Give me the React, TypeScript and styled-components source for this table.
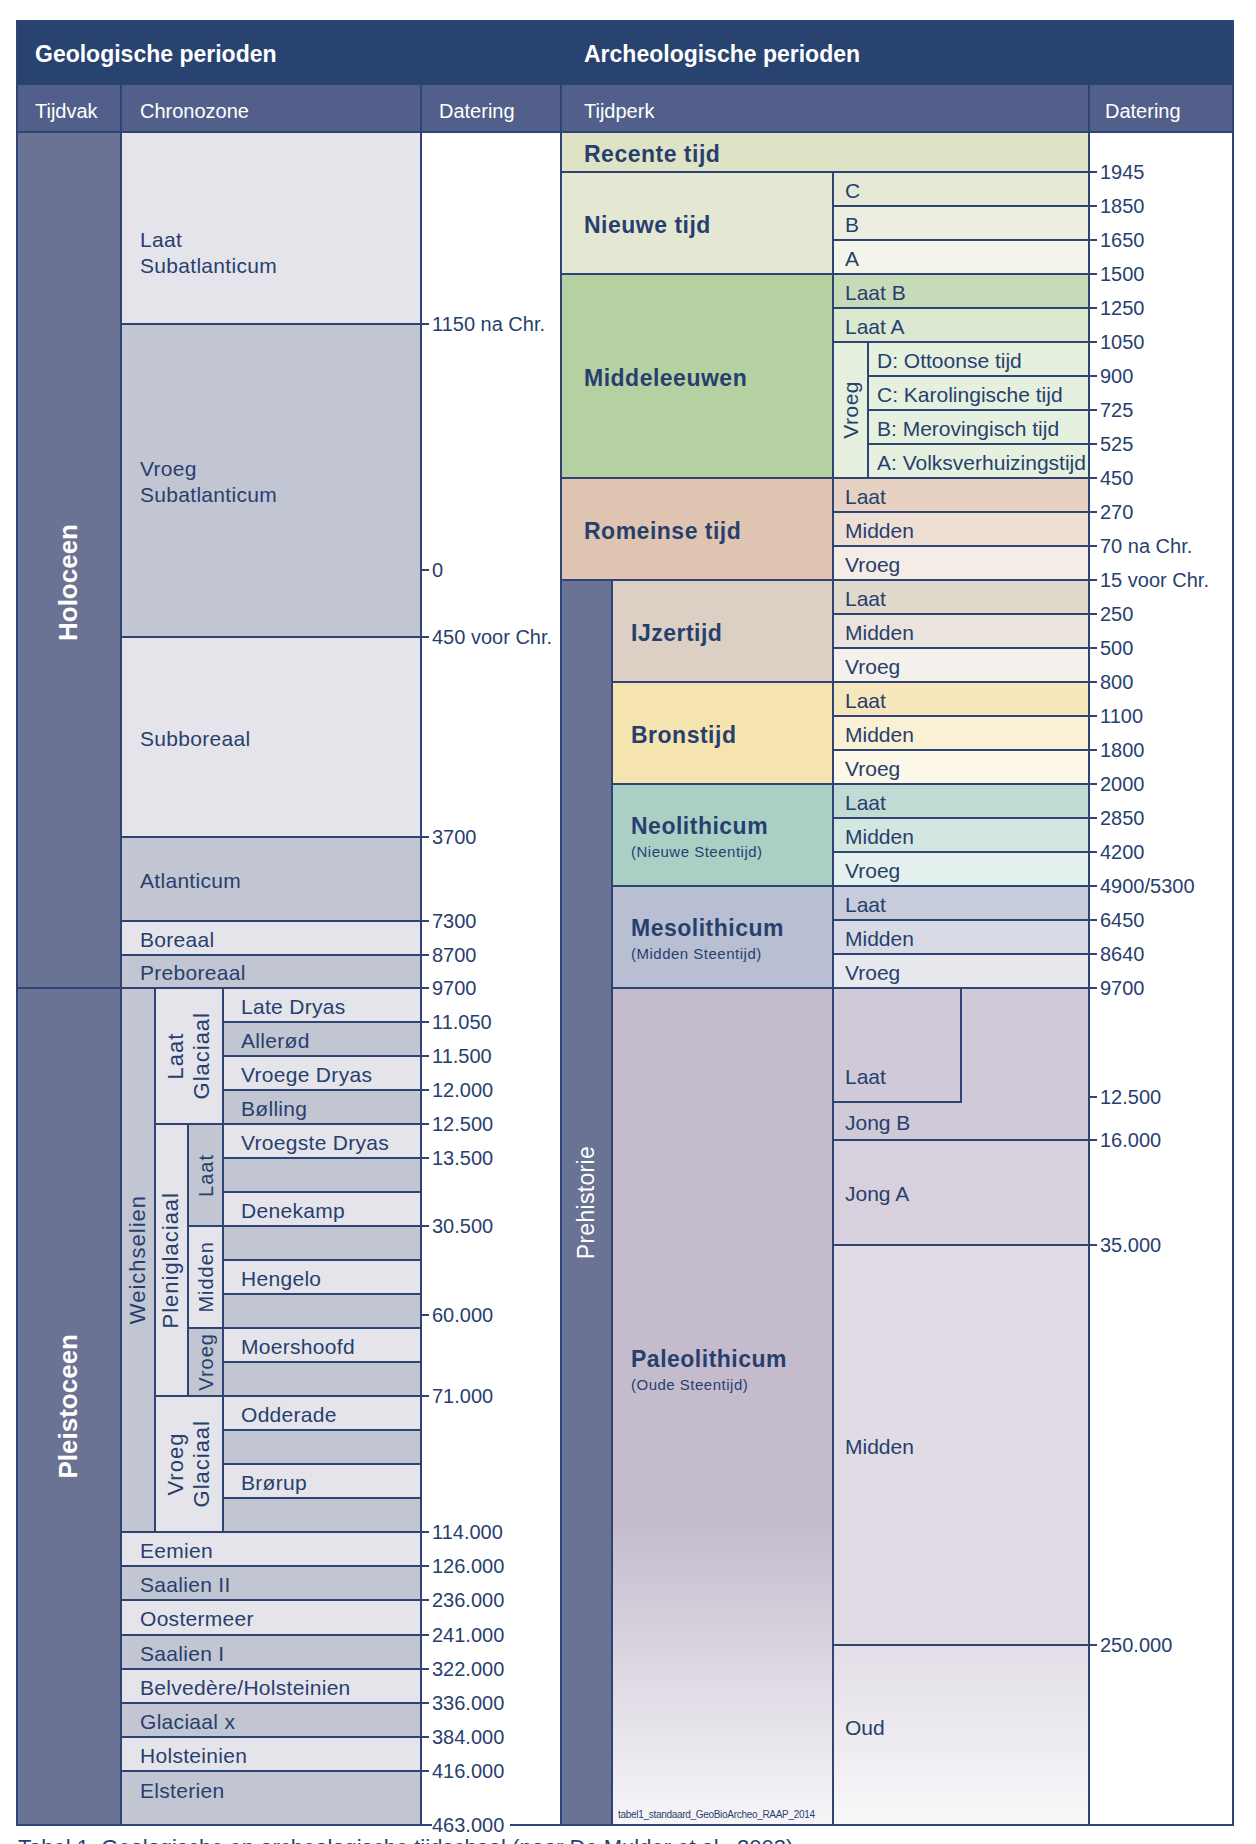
import styled, { createGlobalStyle } from 'styled-components';

const INK = '#283f6e';
const LINE = '#2f4474';
const LIGHT = '#e4e4ea';
const DARK = '#c2c6d3';
const SLATE = '#6b7394';

const GlobalStyle = createGlobalStyle`
  html, body {
    margin: 0;
    padding: 0;
    background: #fff;
  }
  body {
    font-family: "Liberation Sans", Arial, sans-serif;
  }
`;

const Page = styled.div`
  width: 1256px;
  padding: 20px 0 0 16px;
  box-sizing: border-box;
`;

const Frame = styled.div`
  width: 1218px;
  border: 2px solid ${LINE};
  box-sizing: border-box;
`;

const TitleBar = styled.div`
  display: flex;
  height: 63px;
  background: #294371;
`;

const Title = styled.div<{ $w: number; $pl: number }>`
  width: ${(p) => p.$w}px;
  padding: 2px 0 0 ${(p) => p.$pl}px;
  display: flex;
  align-items: center;
  box-sizing: border-box;
  color: #fff;
  font-size: 23px;
  font-weight: 700;
`;

const HeadRow = styled.div`
  display: flex;
  height: 48px;
  background: #525f8a;
  border-bottom: 2px solid ${LINE};
  box-sizing: border-box;
`;

const HeadCell = styled.div<{ $w: number; $pl: number; $last?: boolean }>`
  width: ${(p) => p.$w}px;
  padding: 6px 0 0 ${(p) => p.$pl}px;
  border-right: ${(p) => (p.$last ? 'none' : `2px solid ${LINE}`)};
  display: flex;
  align-items: center;
  box-sizing: border-box;
  color: #fff;
  font-size: 20px;
`;

const Body = styled.div`
  display: flex;
`;

const Grid = styled.div<{ $cols: number[]; $rows: number[]; $edge?: boolean }>`
  display: grid;
  grid-template-columns: ${(p) => p.$cols.map((c) => `${c}px`).join(' ')};
  grid-template-rows: ${(p) => p.$rows.map((r) => `${r}px`).join(' ')};
  border-right: ${(p) => (p.$edge ? `2px solid ${LINE}` : 'none')};
`;

type CellProps = {
  $col: string;
  $row: string;
  $bg?: string;
  $nb?: boolean;
  $nr?: boolean;
  $pl?: number;
  $top?: number;
  $center?: boolean;
};

const Cell = styled.div<CellProps>`
  grid-column: ${(p) => p.$col};
  grid-row: ${(p) => p.$row};
  background: ${(p) => p.$bg ?? 'transparent'};
  border-right: ${(p) => (p.$nr ? 'none' : `2px solid ${LINE}`)};
  border-bottom: ${(p) => (p.$nb ? 'none' : `2px solid ${LINE}`)};
  display: flex;
  flex-direction: column;
  justify-content: ${(p) => (p.$top !== undefined ? 'flex-start' : 'center')};
  align-items: ${(p) => (p.$center ? 'center' : 'flex-start')};
  padding-left: ${(p) => p.$pl ?? 0}px;
  padding-top: ${(p) => p.$top ?? (p.$center ? 0 : 3)}px;
  box-sizing: border-box;
  min-width: 0;
  min-height: 0;
  color: ${INK};
`;

const ZoneName = styled.div`
  font-size: 21px;
  line-height: 26px;
  letter-spacing: 0.3px;
  white-space: nowrap;
`;

const SubName = styled.div`
  font-size: 21px;
  line-height: 26px;
  white-space: nowrap;
`;

const EraName = styled.div`
  font-size: 23px;
  line-height: 28px;
  font-weight: 700;
  letter-spacing: 0.5px;
  white-space: nowrap;
`;

const EraSub = styled.div`
  margin-top: 2px;
  font-size: 15px;
  line-height: 20px;
  letter-spacing: 0.5px;
  white-space: nowrap;
`;

const Stamp = styled.div`
  margin: auto 0 3px -13px;
  font-size: 10px;
  line-height: 12px;
  letter-spacing: -0.3px;
  color: ${INK};
  white-space: nowrap;
`;

const Vert = styled.div<{ $size: number; $bold?: boolean; $light?: boolean; $ls?: number; $shift?: number }>`
  writing-mode: vertical-rl;
  transform: rotate(180deg);
  margin-top: ${(p) => (p.$shift ?? 0) * 2}px;
  font-size: ${(p) => p.$size}px;
  font-weight: ${(p) => (p.$bold ? 700 : 400)};
  color: ${(p) => (p.$light ? '#fff' : INK)};
  letter-spacing: ${(p) => p.$ls ?? 0}px;
  line-height: 1.2;
  text-align: center;
  white-space: nowrap;
`;

const DateSlot = styled.div<{ $col: number; $row: number }>`
  grid-column: ${(p) => p.$col};
  grid-row: ${(p) => p.$row};
  position: relative;
`;

const Mark = styled.div<{ $off: number }>`
  position: absolute;
  left: 0;
  bottom: ${(p) => p.$off}px;
  transform: translateY(50%);
  display: flex;
  align-items: center;
  font-size: 20px;
  line-height: 22px;
  color: ${INK};
  white-space: nowrap;
  z-index: 1;
`;

const Tick = styled.span`
  flex: none;
  width: 7px;
  height: 2px;
  background: ${LINE};
`;

const MarkText = styled.span<{ $clear?: boolean }>`
  margin-left: 3px;
  padding-right: ${(p) => (p.$clear ? '6px' : '0')};
  background: ${(p) => (p.$clear ? '#fff' : 'transparent')};
`;

const Caption = styled.div`
  margin: 9px 0 0 2px;
  font-size: 22px;
  line-height: 26px;
  color: ${INK};
  white-space: nowrap;
`;

type DateMark = { row: number; text: string; off?: number; clear?: boolean };

const DateColumn = ({ col, rows, marks }: { col: number; rows: number; marks: DateMark[] }) => (
  <>
    {Array.from({ length: rows }, (_, i) => i + 1).map((r) => (
      <DateSlot key={r} $col={col} $row={r}>
        {marks
          .filter((m) => m.row === r)
          .map((m) => (
            <Mark key={m.text} $off={m.off ?? 1}>
              <Tick />
              <MarkText $clear={m.clear}>{m.text}</MarkText>
            </Mark>
          ))}
      </DateSlot>
    ))}
  </>
);

const geoRows = [192, 313, 200, 84, 34, 33, ...Array(16).fill(34), 34, 34, 35, 34, 34, 34, 34, 52];
const archRows = [40, ...Array(24).fill(34), 114, 38, 105, 400, 178];

const holocene = [
  { lines: ['Laat', 'Subatlanticum'], bg: LIGHT, top: 94 },
  { lines: ['Vroeg', 'Subatlanticum'], bg: DARK },
  { lines: ['Subboreaal'], bg: LIGHT },
  { lines: ['Atlanticum'], bg: DARK },
  { lines: ['Boreaal'], bg: LIGHT },
  { lines: ['Preboreaal'], bg: DARK },
];

const weichsel = [
  'Late Dryas', 'Allerød', 'Vroege Dryas', 'Bølling', 'Vroegste Dryas', '', 'Denekamp', '',
  'Hengelo', '', 'Moershoofd', '', 'Odderade', '', 'Brørup', '',
];

const olderStages = [
  'Eemien', 'Saalien II', 'Oostermeer', 'Saalien I', 'Belvedère/Holsteinien', 'Glaciaal x', 'Holsteinien', 'Elsterien',
];

const geoDates: DateMark[] = [
  { row: 1, text: '1150 na Chr.' },
  { row: 2, text: '0', off: 68 },
  { row: 2, text: '450 voor Chr.' },
  { row: 3, text: '3700' },
  { row: 4, text: '7300' },
  { row: 5, text: '8700' },
  { row: 6, text: '9700' },
  { row: 7, text: '11.050' },
  { row: 8, text: '11.500' },
  { row: 9, text: '12.000' },
  { row: 10, text: '12.500' },
  { row: 11, text: '13.500' },
  { row: 13, text: '30.500' },
  { row: 16, text: '60.000', off: 14 },
  { row: 18, text: '71.000' },
  { row: 22, text: '114.000' },
  { row: 23, text: '126.000' },
  { row: 24, text: '236.000' },
  { row: 25, text: '241.000' },
  { row: 26, text: '322.000' },
  { row: 27, text: '336.000' },
  { row: 28, text: '384.000' },
  { row: 29, text: '416.000' },
  { row: 30, text: '463.000', off: -1, clear: true },
];

const archDateTexts = [
  '1945', '1850', '1650', '1500', '1250', '1050', '900', '725', '525', '450', '270', '70 na Chr.',
  '15 voor Chr.', '250', '500', '800', '1100', '1800', '2000', '2850', '4200', '4900/5300', '6450', '8640', '9700',
];

const archDates: DateMark[] = [
  ...archDateTexts.map((text, i) => ({ row: i + 1, text })),
  { row: 26, text: '12.500', off: 6 },
  { row: 27, text: '16.000' },
  { row: 28, text: '35.000' },
  { row: 29, text: '250.000' },
];

const triEras = [
  { name: 'Romeinse tijd', start: 11, span: '1 / 3', pl: 22, main: '#dfc4b1', subs: ['#e6d1c2', '#eedfd4', '#f5ece6'] },
  { name: 'IJzertijd', start: 14, span: '2', pl: 18, main: '#dbd0c3', subs: ['#e2d9cd', '#ebe4dc', '#f4f0eb'] },
  { name: 'Bronstijd', start: 17, span: '2', pl: 18, main: '#f5e4b0', subs: ['#f7e7bd', '#faf0d4', '#fcf7e6'] },
  {
    name: 'Neolithicum', sub: '(Nieuwe Steentijd)', start: 20, span: '2', pl: 18,
    main: '#aad0c6', subs: ['#bfdbd3', '#d3e7e0', '#e5f1ed'],
  },
  {
    name: 'Mesolithicum', sub: '(Midden Steentijd)', start: 23, span: '2', pl: 18,
    main: '#b8bfd3', subs: ['#c7ccda', '#d8dbe5', '#e8e9ef'],
  },
];

const medieval = [
  { label: 'D: Ottoonse tijd', row: 7 },
  { label: 'C: Karolingische tijd', row: 8 },
  { label: 'B: Merovingisch tijd', row: 9 },
  { label: 'A: Volksverhuizingstijd', row: 10 },
];

const App = () => {
  return (
    <>
      <GlobalStyle />
      <Page>
        <Frame>
          <TitleBar>
            <Title $w={544} $pl={17}>Geologische perioden</Title>
            <Title $w={670} $pl={22}>Archeologische perioden</Title>
          </TitleBar>
          <HeadRow>
            <HeadCell $w={104} $pl={17}>Tijdvak</HeadCell>
            <HeadCell $w={300} $pl={18}>Chronozone</HeadCell>
            <HeadCell $w={140} $pl={17}>Datering</HeadCell>
            <HeadCell $w={528} $pl={22}>Tijdperk</HeadCell>
            <HeadCell $w={142} $pl={15} $last>Datering</HeadCell>
          </HeadRow>
          <Body>
            <Grid $cols={[104, 34, 33, 35, 198, 138]} $rows={geoRows} $edge>
              <Cell $col="1" $row="1 / 7" $bg={SLATE} $center>
                <Vert $size={26} $bold $light $shift={23}>Holoceen</Vert>
              </Cell>
              <Cell $col="1" $row="7 / 31" $bg={SLATE} $center $nb>
                <Vert $size={26} $bold $light>Pleistoceen</Vert>
              </Cell>

              {holocene.map((z, i) => (
                <Cell key={z.lines.join()} $col="2 / 6" $row={`${i + 1}`} $bg={z.bg} $pl={18} $top={z.top}>
                  {z.lines.map((l) => (
                    <ZoneName key={l}>{l}</ZoneName>
                  ))}
                </Cell>
              ))}

              <Cell $col="2" $row="7 / 23" $bg={DARK} $center>
                <Vert $size={22} $ls={1}>Weichselien</Vert>
              </Cell>
              <Cell $col="3 / 5" $row="7 / 11" $bg={LIGHT} $center>
                <Vert $size={22} $ls={1}>
                  Laat
                  <br />
                  Glaciaal
                </Vert>
              </Cell>
              <Cell $col="3" $row="11 / 19" $bg={LIGHT} $center>
                <Vert $size={22} $ls={1}>Pleniglaciaal</Vert>
              </Cell>
              <Cell $col="4" $row="11 / 14" $bg={DARK} $center>
                <Vert $size={20} $ls={1}>Laat</Vert>
              </Cell>
              <Cell $col="4" $row="14 / 17" $bg={LIGHT} $center>
                <Vert $size={20} $ls={1}>Midden</Vert>
              </Cell>
              <Cell $col="4" $row="17 / 19" $bg={DARK} $center>
                <Vert $size={20} $ls={1}>Vroeg</Vert>
              </Cell>
              <Cell $col="3 / 5" $row="19 / 23" $bg={LIGHT} $center>
                <Vert $size={22} $ls={1}>
                  Vroeg
                  <br />
                  Glaciaal
                </Vert>
              </Cell>

              {weichsel.map((name, i) => (
                <Cell key={`w${i}`} $col="5" $row={`${i + 7}`} $bg={i % 2 ? DARK : LIGHT} $pl={17}>
                  {name && <ZoneName>{name}</ZoneName>}
                </Cell>
              ))}

              {olderStages.map((name, i) => (
                <Cell
                  key={name}
                  $col="2 / 6"
                  $row={`${i + 23}`}
                  $bg={i % 2 ? DARK : LIGHT}
                  $pl={18}
                  $nb={i === olderStages.length - 1}
                  $top={i === olderStages.length - 1 ? 6 : undefined}
                >
                  <ZoneName>{name}</ZoneName>
                </Cell>
              ))}

              <DateColumn col={6} rows={30} marks={geoDates} />
            </Grid>

            <Grid $cols={[51, 221, 35, 93, 128, 142]} $rows={archRows}>
              <Cell $col="1 / 6" $row="1" $bg="#dfe3c6" $pl={22}>
                <EraName>Recente tijd</EraName>
              </Cell>

              <Cell $col="1 / 3" $row="2 / 5" $bg="#e4e8d3" $pl={22}>
                <EraName>Nieuwe tijd</EraName>
              </Cell>
              {[
                ['C', '#e5e9d5'],
                ['B', '#ecefe0'],
                ['A', '#f3f5ea'],
              ].map(([label, bg], i) => (
                <Cell key={label} $col="3 / 6" $row={`${i + 2}`} $bg={bg} $pl={11}>
                  <SubName>{label}</SubName>
                </Cell>
              ))}

              <Cell $col="1 / 3" $row="5 / 11" $bg="#b5d0a1" $pl={22}>
                <EraName>Middeleeuwen</EraName>
              </Cell>
              <Cell $col="3 / 6" $row="5" $bg="#c8dbb9" $pl={11}>
                <SubName>Laat B</SubName>
              </Cell>
              <Cell $col="3 / 6" $row="6" $bg="#dce8d0" $pl={11}>
                <SubName>Laat A</SubName>
              </Cell>
              <Cell $col="3" $row="7 / 11" $bg="#e6f0de" $center>
                <Vert $size={21} $ls={0.5}>Vroeg</Vert>
              </Cell>
              {medieval.map((m) => (
                <Cell key={m.label} $col="4 / 6" $row={`${m.row}`} $bg="#e6f0de" $pl={8}>
                  <SubName>{m.label}</SubName>
                </Cell>
              ))}

              <Cell $col="1" $row="14 / 31" $bg={SLATE} $center $nb>
                <Vert $size={23} $light $ls={0.3}>Prehistorie</Vert>
              </Cell>

              {triEras.map((era) => (
                <>
                  <Cell
                    key={era.name}
                    $col={era.span}
                    $row={`${era.start} / ${era.start + 3}`}
                    $bg={era.main}
                    $pl={era.pl}
                  >
                    <EraName>{era.name}</EraName>
                    {era.sub && <EraSub>{era.sub}</EraSub>}
                  </Cell>
                  {['Laat', 'Midden', 'Vroeg'].map((label, i) => (
                    <Cell
                      key={`${era.name}-${label}`}
                      $col="3 / 6"
                      $row={`${era.start + i}`}
                      $bg={era.subs[i]}
                      $pl={11}
                    >
                      <SubName>{label}</SubName>
                    </Cell>
                  ))}
                </>
              ))}

              <Cell
                $col="2"
                $row="26 / 31"
                $bg="linear-gradient(to bottom, #c4bccd 0%, #c4bccd 64%, #f7f5f8 100%)"
                $pl={18}
                $top={356}
                $nb
              >
                <EraName>Paleolithicum</EraName>
                <EraSub>(Oude Steentijd)</EraSub>
                <Stamp>tabel1_standaard_GeoBioArcheo_RAAP_2014</Stamp>
              </Cell>
              <Cell $col="3 / 5" $row="26" $bg="#d0c9d8" $pl={11} $top={75}>
                <SubName>Laat</SubName>
              </Cell>
              <Cell $col="5" $row="26 / 28" $bg="#d0c9d8" />
              <Cell $col="3 / 5" $row="27" $bg="#d0c9d8" $pl={11} $nr>
                <SubName>Jong B</SubName>
              </Cell>
              <Cell $col="3 / 6" $row="28" $bg="#d8d0dd" $pl={11}>
                <SubName>Jong A</SubName>
              </Cell>
              <Cell $col="3 / 6" $row="29" $bg="#e0dbe4" $pl={11}>
                <SubName>Midden</SubName>
              </Cell>
              <Cell
                $col="3 / 6"
                $row="30"
                $bg="linear-gradient(to bottom, #e3dee7 0%, #f8f7f9 100%)"
                $pl={11}
                $top={69}
                $nb
              >
                <SubName>Oud</SubName>
              </Cell>

              <DateColumn col={6} rows={30} marks={archDates} />
            </Grid>
          </Body>
        </Frame>
        <Caption>Tabel 1. Geologische en archeologische tijdschaal (naar De Mulder et al., 2003).</Caption>
      </Page>
    </>
  );
};

export default App;
